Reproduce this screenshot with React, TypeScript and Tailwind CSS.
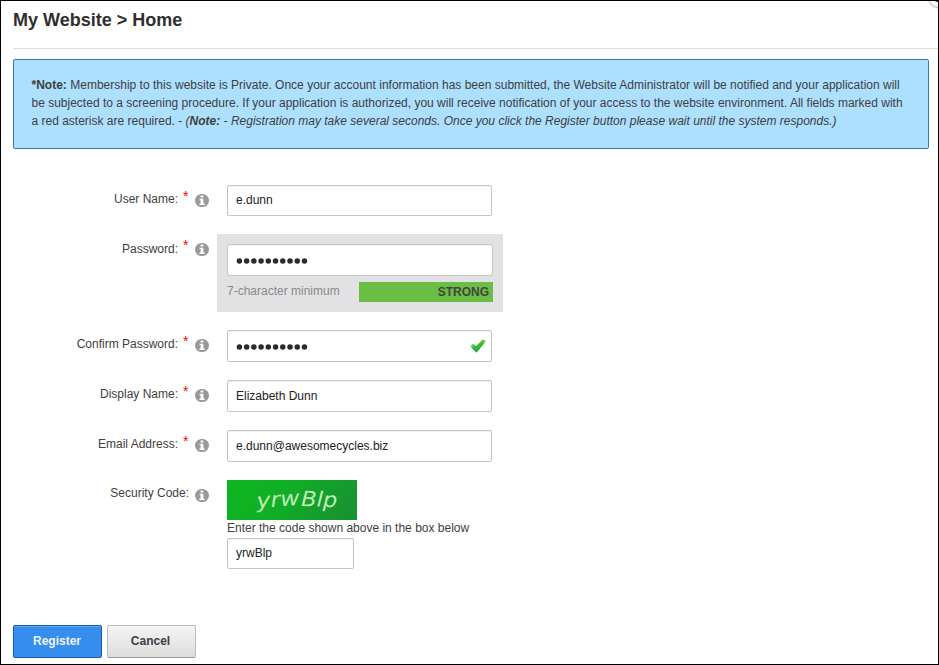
import type { ReactNode } from "react";

function InfoIcon() {
  return (
    <svg viewBox="0 0 14 13" className="h-[13px] w-[14px]">
      <ellipse cx="7" cy="6.5" rx="7" ry="6.6" fill="#999" />
      <path d="M5.6 1.6h2.7v2H5.6zM4.6 4.8h3.8v4.7h1.2v1.4H4.4V9.500h1.200V6.200h-1z" fill="#fff" />
    </svg>
  );
}

function CheckIcon() {
  return (
    <svg viewBox="0 0 16 14" className="h-[14px] w-[16px]">
      <defs>
        <linearGradient id="tick" x1="0" y1="0" x2="1" y2="0">
          <stop offset="0" stopColor="#8fdca6" />
          <stop offset="0.3" stopColor="#2fb04a" />
          <stop offset="0.6" stopColor="#3fbf2c" />
          <stop offset="1" stopColor="#62cc30" />
        </linearGradient>
      </defs>
      <path d="M.3 7.200 2.900 4.800 6 6.900 12.800.4l3 1.900L6.500 13.800z" fill="url(#tick)" />
      <path d="M1.500 8.200 6.400 12.400 13.500 4" stroke="#149a2c" strokeWidth="1.200" fill="none" opacity=".55" />
    </svg>
  );
}

interface RowProps {
  label: string;
  required?: boolean;
  labelClass: string;
  iconClass?: string;
  className: string;
  children: ReactNode;
}

function Row({ label, required, labelClass, iconClass = "mt-[9px]", className, children }: RowProps) {
  return (
    <div className={`flex items-start ${className}`}>
      <div className="flex w-[208px] shrink-0 items-start justify-end">
        <span className={`leading-[14px] ${labelClass}`}>{label}</span>
        {required && <span className="ml-[5px] mt-[4px] w-[6px] text-[14px] leading-[14px] text-[#f00]">*</span>}
        <span className={`ml-[6px] ${iconClass}`}>
          <InfoIcon />
        </span>
      </div>
      {children}
    </div>
  );
}

const box =
  "flex items-center rounded-[2px] border border-[#c5c5c5] bg-white px-[8px] text-[#222] shadow-[inset_0_1px_1px_rgba(0,0,0,0.06)]";

function Dots() {
  return (
    <svg className="mt-px h-[6px] w-[73px]" viewBox="0 0 73 6">
      {Array.from({ length: 10 }, (_, i) => (
        <circle key={i} cx={3.4 + i * 7.23} cy="3" r="2.75" fill="#2b2b2b" />
      ))}
    </svg>
  );
}

export default function App() {
  return (
    <div className="relative h-[665px] w-[939px] overflow-hidden border border-black bg-white font-['Liberation_Sans',Arial,sans-serif] text-[12px] text-[#404040]">
      <div className="absolute -top-[15px] left-[927px] h-[22px] w-[22px] rounded-full border border-[#c4c4c4] bg-white shadow-[0_0_2px_#bbb]">
        <div className="absolute left-[6px] top-[11px] h-[4px] w-[6px] rounded-full bg-[#444]" />
      </div>

      <header className="ml-[12px] h-[48px] border-b border-[#ddd] pt-[8px]">
        <h1 className="text-[18px] font-bold leading-[22px] text-[#2f2f2f]">My Website &gt; Home</h1>
      </header>

      <div className="ml-[12px] mt-[10px] h-[90px] w-[916px] whitespace-nowrap rounded-[2px] border border-[#2f7dc4] bg-[#addfff] pl-[17.500px] pt-[16px] leading-[18px]">
        <p className="tracking-[0.004px]">
          <b>*Note:</b> Membership to this website is Private. Once your account information has been submitted, the Website Administrator will be notified and your application will
        </p>
        <p>be subjected to a screening procedure. If your application is authorized, you will receive notification of your access to the website environment. All fields marked with</p>
        <p>
          a red asterisk are required. - <i>(<b>Note:</b> - Registration may take several seconds. Once you click the Register button please wait until the system responds.)</i>
        </p>
      </div>

      <main className="mt-[36px] h-[440px]">
        <Row label="User Name:" required labelClass="mt-[7px]" className="mb-[18px] h-[31px]">
          <div className={`ml-[18px] h-[31px] w-[265px] pb-[2px] ${box}`}>e.dunn</div>
        </Row>
        <Row label="Password:" required labelClass="mt-[8px]" className="mb-[18px] h-[78px]">
          <div className="ml-[8px] h-[78px] w-[286px] bg-[#e2e2e4] px-[10px] pt-[10px]">
            <div className={`h-[32px] w-[266px] ${box}`}>
              <Dots />
            </div>
            <div className="mt-[6px] flex h-[20px] justify-between leading-[18px]">
              <span className="text-[#8a8a8a]">7-character minimum</span>
              <span className="h-[20px] w-[134px] bg-[#69be43] pr-[4px] text-right font-bold leading-[20px] text-[#444]">STRONG</span>
            </div>
          </div>
        </Row>
        <Row label="Confirm Password:" required labelClass="mt-[7px]" className="mb-[18px] h-[32px]">
          <div className={`ml-[18px] h-[32px] w-[265px] justify-between ${box} pr-[5px]`}>
            <Dots />
            <CheckIcon />
          </div>
        </Row>
        <Row label="Display Name:" required labelClass="mt-[7px]" className="mb-[18px] h-[32px]">
          <div className={`ml-[18px] h-[32px] w-[265px] ${box}`}>Elizabeth Dunn</div>
        </Row>
        <Row label="Email Address:" required labelClass="mt-[7px]" className="mb-[18px] h-[32px]">
          <div className={`ml-[18px] h-[32px] w-[265px] ${box}`}>e.dunn@awesomecycles.biz</div>
        </Row>
        <Row label="Security Code:" labelClass="mt-[6px]" className="h-[90px]">
          <div className="ml-[18px]">
            <svg viewBox="0 0 130 40" className="block h-[40px] w-[130px]">
              <defs>
                <linearGradient id="captcha" x1="0" y1=".3" x2="1" y2=".5">
                  <stop offset="0" stopColor="#0db521" />
                  <stop offset="0.4" stopColor="#10b024" />
                  <stop offset="1" stopColor="#179331" />
                </linearGradient>
              </defs>
              <rect width="130" height="40" fill="url(#captcha)" />
              <g fill="#bdebb9" fontFamily="DejaVu Sans" fontStyle="italic" fontSize="21">
                <text x="30" y="28" textLength="43" lengthAdjust="spacingAndGlyphs" transform="rotate(-4 30 27)">yrw</text>
                <text x="74" y="26" textLength="36" lengthAdjust="spacingAndGlyphs" transform="rotate(2 74 26)">Blp</text>
              </g>
            </svg>
            <p className="h-[18px] whitespace-nowrap leading-[16px]">Enter the code shown above in the box below</p>
            <div className={`h-[31px] w-[127px] pb-[2px] ${box}`}>yrwBlp</div>
          </div>
        </Row>
        <div className="ml-[12px] mt-[55px] flex gap-[5px] text-[12px] font-bold">
          <button className="h-[33px] w-[89px] rounded-[2px] border border-[#1560a8] bg-[#358eed] pb-[1px] pr-px text-[#eef3fa] shadow-[inset_0_1px_0_#62a9f2]">Register</button>
          <button className="h-[33px] w-[89px] rounded-[2px] border border-[#bbb] border-b-[#999] bg-linear-to-b from-[#f5f5f5] to-[#dcdcdc] pb-[1px] pr-[2px] text-[#404040]">Cancel</button>
        </div>
      </main>
    </div>
  );
}
